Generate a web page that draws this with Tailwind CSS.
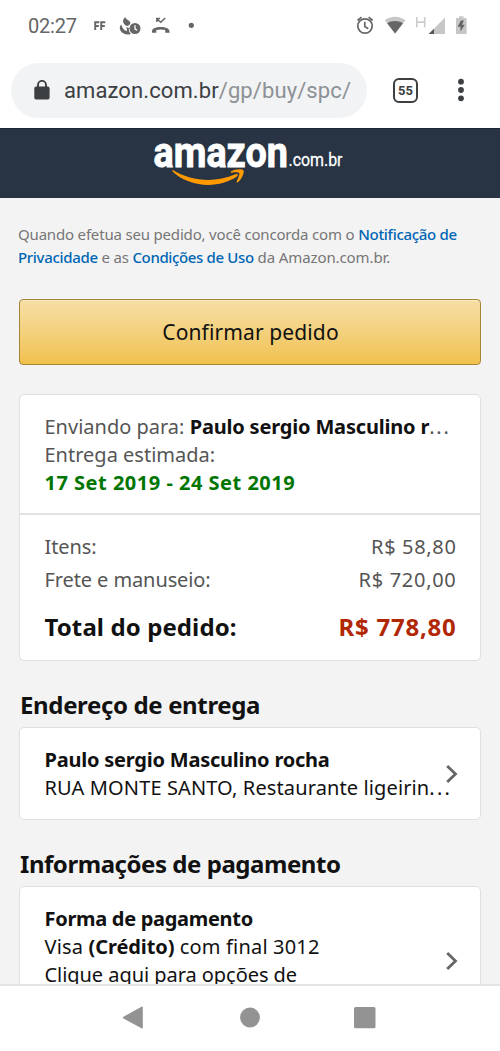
<!DOCTYPE html>
<html lang="pt-BR">
<head>
<meta charset="utf-8">
<meta name="viewport" content="width=device-width, initial-scale=1">
<title>Confirmar pedido</title>
<script src="https://cdn.jsdelivr.net/npm/@tailwindcss/browser@4"></script>
</head>
<body class="flex h-[1051px] w-[500px] flex-col overflow-hidden bg-white font-['Noto_Sans',sans-serif] text-[20px] leading-7 text-[#111]">

<!-- Status bar -->
<div class="flex h-[52px] shrink-0 items-center pl-[28px] font-['Roboto',sans-serif] text-[#666]">
  <span class="w-[65px] text-[20px] tracking-[-0.2px]">02:27</span>
  <svg class="h-[52px] w-[407px]" viewBox="93 0 407 52" fill="#666">
    <g fill="none" stroke="#666" stroke-width="1.9"><path d="M95.200 30V22.300H99.300M95.200 26H98.800M101.200 30V22.300H105.300M101.200 26H104.800"/></g>
    <path d="M125.300 16.800C125.500 19.500 128.500 20 130 21.800C131 23.300 129.500 25.300 127.500 26C125 25.700 123 23.500 123 21.300C123 19.500 124.300 18.300 125.300 16.800Z"/>
    <path d="M121.300 24.500C119.300 26 119.300 29.500 121.500 32C123.700 34.500 127.500 35 131 33.900C129 32 128.500 30 129 28L126.500 27L127 31C124.500 31 122 28 121.300 24.500Z"/>
    <circle cx="135" cy="28.500" r="5.500"/><path d="M135 25.300V29L137.300 30.300" stroke="#fff" stroke-width="1.300" fill="none"/>
    <path d="M157 19L160.700 22.300L165.200 18M156.800 22V18.600H160" fill="none" stroke="#666" stroke-width="1.500"/>
    <path d="M152 32.800C151.300 29.300 154 27 160.700 27S170 29.300 169.600 32.800H165.200V30C162 29.200 159.500 29.200 156.300 30V32.800Z"/>
    <circle cx="191.300" cy="25.300" r="2.600"/>
    <g fill="none" stroke="#666" stroke-width="1.700"><circle cx="365" cy="26" r="7.200"/><path d="M364.800 21.800V26.600L368.300 28.700M357.500 20.500L361.500 17.200M368.700 17.200L372.600 20.500"/></g>
    <path d="M384.700 20.300C390.500 15.500 399.500 15.500 405.500 20.300L395.100 33.500Z" fill="#c7c7c7"/>
    <path d="M387.200 23.200C391.800 20.200 398.300 20.200 403 23.200L395.100 33.500Z"/>
    <path d="M416.800 17V27.300M424.700 17V27.300M416.800 22.100H424.700" stroke="#ccc" stroke-width="1.700"/>
    <path d="M445 17.500V34H428.700Z" fill="#c7c7c7"/><path d="M434 28.700V34H428.700Z" fill="#555"/>
    <path d="M456 18H459V16.300H463.500V18H466.600V34H456Z" fill="#c7c7c7"/>
    <path d="M460.800 20.500L457.700 26.800H460.500V31.500L464.800 24.700H462L464 20.500Z"/>
  </svg>
</div>

<!-- Browser toolbar -->
<div class="flex h-[76px] shrink-0 items-center pl-[11px] font-['Roboto',sans-serif]">
  <div class="flex h-[55px] w-[356px] items-center rounded-full bg-[#f1f3f4] pl-[23px]">
    <svg class="mr-[14px] h-[20px] w-[16px]" viewBox="0 0 16 20"><rect x="0.300" y="6.500" width="15.300" height="13" rx="1.800" fill="#3c4043"/><path d="M4 7V4.900a4 4 0 0 1 8 0V7" fill="none" stroke="#3c4043" stroke-width="1.900"/></svg>
    <span class="pt-px whitespace-nowrap text-[22px] tracking-[0.1px] text-[#3c4043]">amazon.com.br<span class="text-[#8d9195]">/gp/buy/spc/</span></span>
  </div>
  <div class="ml-[26px] flex size-[25px] items-center justify-center rounded-[6px] border-[2.500px] border-[#3c4043] text-[13px] leading-none font-bold text-[#3c4043]">55</div>
  <svg class="ml-[39px] h-[24px] w-[8px]" viewBox="0 0 8 24" fill="#3c4043"><circle cx="4" cy="3.700" r="2.900"/><circle cx="4" cy="12" r="2.900"/><circle cx="4" cy="20.300" r="2.900"/></svg>
</div>

<!-- Store header -->
<div class="h-[70px] shrink-0 border-t border-[#1a2435] bg-[#283443]">
  <svg class="h-[69px] w-[500px]" viewBox="0 129 500 69" font-family="Roboto, sans-serif" fill="#fff">
    <text x="153.500" y="167" font-size="42" font-weight="700" textLength="134.500" lengthAdjust="spacingAndGlyphs" stroke="#fff" stroke-width="0.900">amazon</text>
    <text x="288.500" y="166.300" font-size="18.500" textLength="54" lengthAdjust="spacingAndGlyphs" stroke="#fff" stroke-width="0.300">.com.br</text>
    <path d="M173.300 170.200C191 181 214 183.500 235.500 174.300C237.500 173.500 238.800 175.300 237 176.600C219 188.800 190 188 172.600 171.600C171.900 170.700 172.500 169.800 173.300 170.200Z" fill="#f90"/>
    <path d="M231 171.500C235 168.700 242 168.800 243.500 170.300C244.500 172.500 242 179.500 237.800 182.300C237 182.800 236.300 182.400 236.700 181.500C238 178.500 240 174 239.200 173.100C238 172 234.500 172.300 231.700 172.700C230.600 172.800 230.300 172 231 171.500Z" fill="#f90"/>
  </svg>
</div>

<!-- Order review -->
<main class="h-[786px] shrink-0 overflow-hidden bg-[#f3f3f3] px-[19px] pt-[25px]">
  <p class="-ml-px whitespace-nowrap text-[15px] leading-[23px] tracking-[-0.18px] text-[#767676]">Quando efetua seu pedido, você concorda com o <a class="font-medium tracking-[-0.3px] text-[#0066b4]">Notificação de</a><br><a class="font-medium tracking-[-0.32px] text-[#0066b4]">Privacidade</a> e as <a class="font-medium tracking-[-0.36px] text-[#0066b4]">Condições de Uso</a> <span class="tracking-[-0.1px]">da Amazon.com.br.</span></p>

  <button class="mt-[30px] block h-[66px] w-[462px] rounded-[4px] border border-[#a88734] bg-linear-to-b from-[#f6dfa5] to-[#f0c14b] pl-px text-[21px] tracking-[0.12px] shadow-[inset_0_1px_0_#f9eac4]">Confirmar pedido</button>

  <section class="mt-[29px] h-[267px] w-[462px] rounded-[5px] border-[1.500px] border-[#dfdfdf] bg-white">
    <div class="h-[120px] border-b-2 border-[#e3e3e3] pl-[24.500px] pt-[18px] text-[#555]">
      <div class="whitespace-nowrap">Enviando para: <b class="tracking-[-0.18px] text-[#111]">Paulo sergio Masculino r</b><span class="tracking-[1.8px]">...</span></div>
      <div>Entrega estimada:</div>
      <div class="font-bold tracking-[0.5px] text-[#007600]">17 Set 2019 - 24 Set 2019</div>
    </div>
    <div class="pr-[24px] pl-[24.500px] pt-[15px] text-[#555]">
      <div class="flex h-[33px] items-center justify-between"><span class="tracking-[-0.1px]">Itens:</span><span class="-mr-[0.5px] tracking-[0.65px]">R$ 58,80</span></div>
      <div class="flex h-[33px] items-center justify-between"><span class="tracking-[-0.1px]">Frete e manuseio:</span><span class="-mr-[0.5px] tracking-[0.7px]">R$ 720,00</span></div>
      <div class="mt-[13px] flex h-[36px] items-center justify-between text-[24px] font-bold text-[#111]"><span class="tracking-[0.1px]">Total do pedido:</span><span class="-mr-[0.5px] tracking-[0.75px] text-[#b12704]">R$ 778,80</span></div>
    </div>
  </section>

  <h2 class="mt-[27px] h-[39px] pl-px text-[24px] leading-[34px] font-bold tracking-[-0.36px]">Endereço de entrega</h2>
  <section class="flex h-[93px] w-[462px] items-center rounded-[5px] border-[1.500px] border-[#dfdfdf] bg-white pl-[24.500px]">
    <div class="w-[401px] whitespace-nowrap"><div class="font-bold tracking-[-0.22px]">Paulo sergio Masculino rocha</div><div class="tracking-[0.12px]">RUA MONTE SANTO, Restaurante ligeirin<span class="tracking-[2.2px]">...</span></div></div>
    <svg class="h-[20px] w-[12px]" viewBox="0 0 12 20" fill="none" stroke="#666" stroke-width="2.800"><path d="M1.200 2L9.500 10L1.200 18"/></svg>
  </section>

  <h2 class="mt-[27px] h-[39px] pl-px text-[24px] leading-[34px] font-bold tracking-[-0.45px]">Informações de pagamento</h2>
  <section class="flex h-[150px] w-[462px] items-center rounded-[5px] border-[1.500px] border-[#dfdfdf] bg-white pl-[24.500px]">
    <div class="w-[401px] pb-7 whitespace-nowrap"><div class="font-bold tracking-[-0.3px]">Forma de pagamento</div><div class="tracking-[0.18px]">Visa <b class="tracking-[-0.1px]">(Crédito)</b> com final 3012</div><div class="tracking-[-0.05px]">Clique aqui para opções de</div></div>
    <svg class="h-[20px] w-[12px]" viewBox="0 0 12 20" fill="none" stroke="#666" stroke-width="2.800"><path d="M1.200 2L9.500 10L1.200 18"/></svg>
  </section>
</main>

<!-- System navigation -->
<nav class="h-[67px] shrink-0 border-t-2 border-[#e3e3e3] bg-white">
  <svg class="h-[65px] w-[500px]" viewBox="0 986 500 65" fill="#939393"><path d="M123.500 1016.800L141.500 1006.800Q142.800 1006.200 142.800 1007.500V1027.500Q142.800 1029 141.500 1028.300L123.500 1018.400Q122.300 1017.600 123.500 1016.800Z"/><circle cx="250" cy="1017.500" r="9.900"/><rect x="354" y="1007" width="21.500" height="21.300" rx="1.500"/></svg>
</nav>
</body>
</html>
